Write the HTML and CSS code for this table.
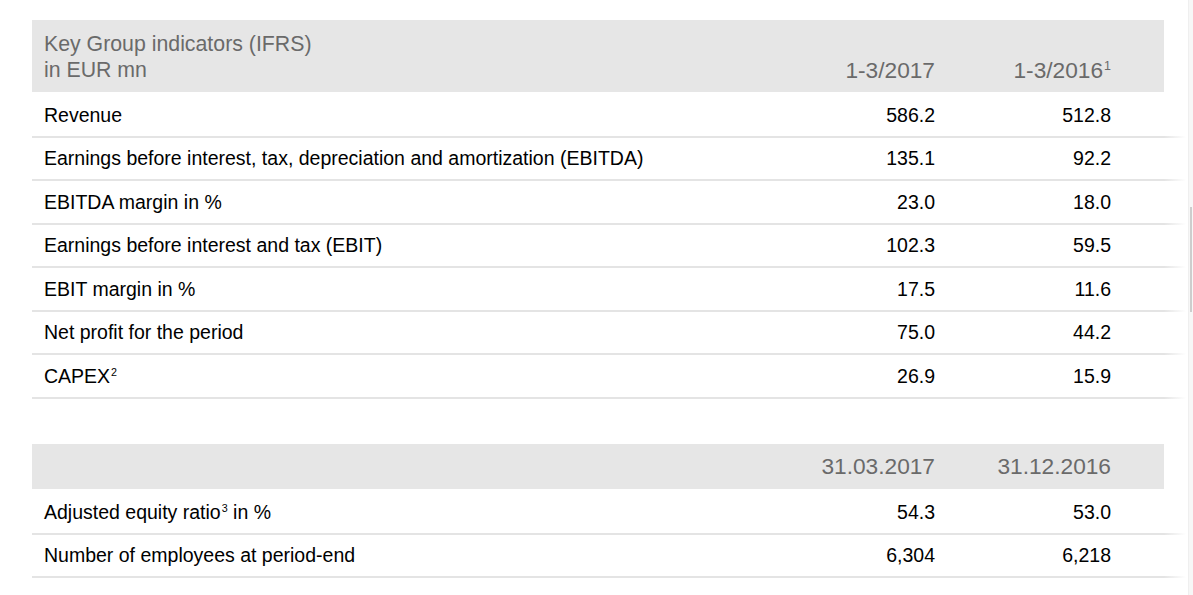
FILE: index.html
```html
<!DOCTYPE html>
<html lang="en">
<head>
<meta charset="utf-8">
<title>Key Group indicators</title>
<link rel="stylesheet" href="styles.css">
</head>
<body>
<div class="page">
  <section class="kpi">
    <div class="row head head-tall">
      <div class="cell label"><span class="title">Key Group indicators (IFRS)</span><span class="title">in EUR mn</span></div>
      <div class="cell num">1-3/2017</div>
      <div class="cell num">1-3/2016<sup>1</sup></div>
    </div>
    <div class="row"><div class="cell label">Revenue</div><div class="cell num">586.2</div><div class="cell num">512.8</div></div>
    <div class="row"><div class="cell label">Earnings before interest, tax, depreciation and amortization (EBITDA)</div><div class="cell num">135.1</div><div class="cell num">92.2</div></div>
    <div class="row"><div class="cell label">EBITDA margin in %</div><div class="cell num">23.0</div><div class="cell num">18.0</div></div>
    <div class="row"><div class="cell label">Earnings before interest and tax (EBIT)</div><div class="cell num">102.3</div><div class="cell num">59.5</div></div>
    <div class="row"><div class="cell label">EBIT margin in %</div><div class="cell num">17.5</div><div class="cell num">11.6</div></div>
    <div class="row"><div class="cell label">Net profit for the period</div><div class="cell num">75.0</div><div class="cell num">44.2</div></div>
    <div class="row"><div class="cell label">CAPEX<sup>2</sup></div><div class="cell num">26.9</div><div class="cell num">15.9</div></div>
  </section>
  <section class="kpi kpi-second">
    <div class="row head head-short">
      <div class="cell label"></div>
      <div class="cell num">31.03.2017</div>
      <div class="cell num">31.12.2016</div>
    </div>
    <div class="row"><div class="cell label">Adjusted equity ratio<sup>3</sup> in %</div><div class="cell num">54.3</div><div class="cell num">53.0</div></div>
    <div class="row"><div class="cell label">Number of employees at period-end</div><div class="cell num">6,304</div><div class="cell num">6,218</div></div>
  </section>
</div>
<div class="scrollbar"><div class="thumb"></div></div>
</body>
</html>
```

FILE: styles.css
```css
html, body {
  margin: 0;
  padding: 0;
  background: #ffffff;
}
body {
  font-family: "Liberation Sans", Arial, sans-serif;
  color: #000;
}
.page {
  padding: 20px 0 0 32px;
}
.kpi {
  width: 1154px;
}
.kpi-second {
  margin-top: 45.5px;
}
.row {
  display: grid;
  grid-template-columns: 1fr 176px 176px;
  padding-right: 75px;
  height: 43.5px;
  box-sizing: border-box;
  padding-bottom: 1.5px;
  align-items: center;
  font-size: 19.5px;
  background: linear-gradient(to right, #e4e4e4 0, #e4e4e4 1132px, rgba(228,228,228,0) 1154px) left bottom / 100% 2px no-repeat;
}
.head + .row {
  height: 45.5px;
  padding-top: 2px;
}
.row.head {
  background: #e6e6e6;
  margin-right: 22px;
  padding-right: 53px;
  padding-bottom: 0;
  color: #6a6a6a;
  font-size: 22.7px;
}
.row.head-tall {
  height: 72px;
  align-items: end;
  padding-top: 10px;
  padding-bottom: 9px;
  line-height: 26px;
}
.row.head-short {
  height: 45px;
}
.cell.label {
  padding-left: 12px;
}
.head-tall .label {
  display: flex;
  flex-direction: column;
  font-size: 21.3px;
}
.title {
  display: block;
}
.cell.num {
  text-align: right;
}
sup {
  font-size: 0.55em;
  vertical-align: 0.65em;
  line-height: 0;
  margin-left: 1px;
}
.scrollbar {
  position: fixed;
  top: 0;
  right: 0;
  width: 4px;
  height: 100%;
  background: #f7f7f7;
  border-left: 1px solid #efefef;
}
.thumb {
  position: absolute;
  top: 207px;
  left: 1px;
  width: 2px;
  height: 105px;
  background: #cdcdcd;
}
```
